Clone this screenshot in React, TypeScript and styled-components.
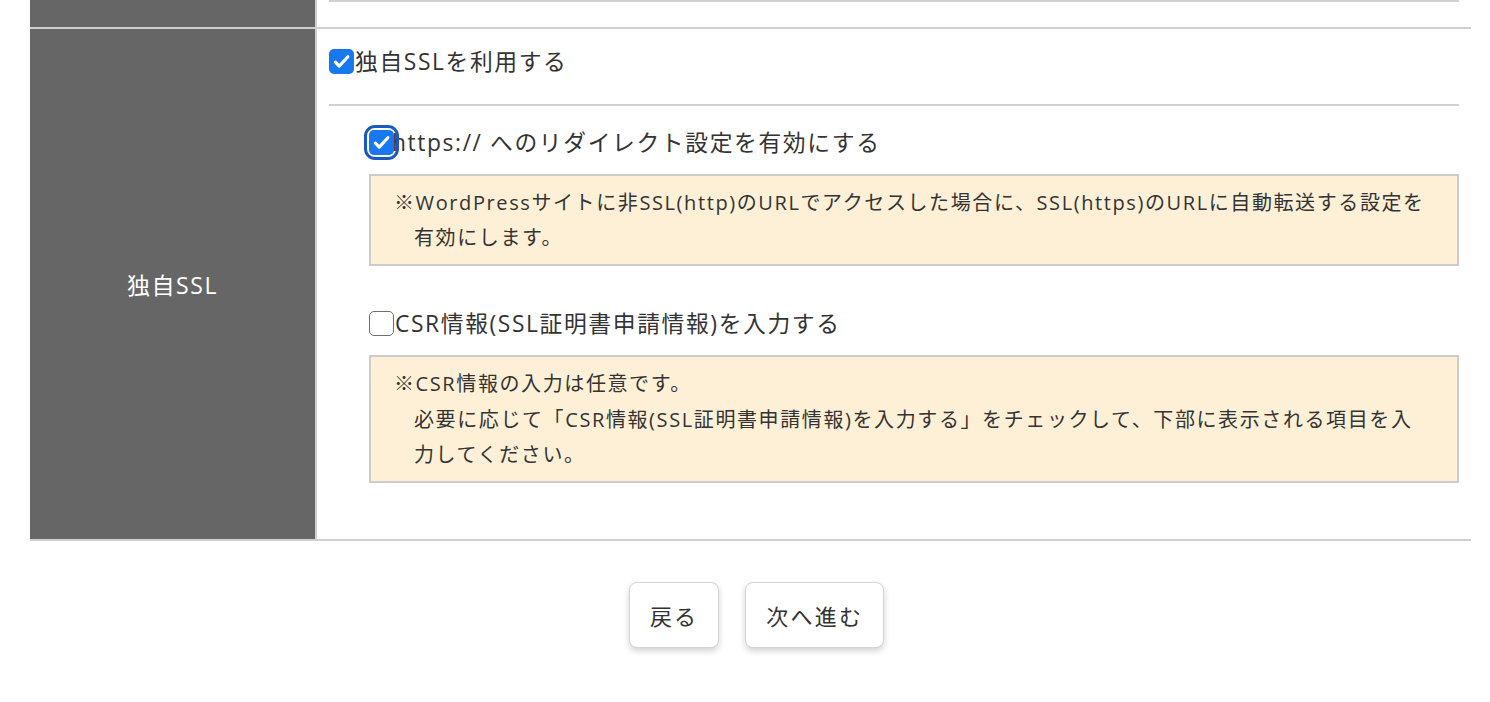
import { FC } from 'react';
import styled, { createGlobalStyle } from 'styled-components';

const GlobalStyle = createGlobalStyle`
    body {
        margin: 0;
        background: #fff;
        color: #333;
        font-family: "Open Sans", "Noto Sans CJK JP", sans-serif;
        letter-spacing: 0.1em;
    }
`;

type CheckProps = {
    checked?: boolean;
    focused?: boolean;
};

const Checkbox: FC<CheckProps> = ({ checked, focused }) => (
    <CheckFrame $focused={focused}>
        <CheckBox $checked={checked}>
            {checked && (
                <svg width="21" height="21" viewBox="0 0 24 24" fill="none">
                    <path d="M5 12.8l4.4 4.4L19.3 6.6" stroke="#fff" strokeWidth="3.6" strokeLinecap="round" strokeLinejoin="round" />
                </svg>
            )}
        </CheckBox>
    </CheckFrame>
);

type OptionProps = CheckProps & { label: string };

const Option: FC<OptionProps> = ({ label, checked, focused }) => (
    <OptionLabel>
        <Checkbox checked={checked} focused={focused} />
        <OptionText $pullLeft={focused}>{label}</OptionText>
    </OptionLabel>
);

export default function App() {
    return (
        <>
            <GlobalStyle />
            <Page>
                <Table>
                    <Row>
                        <LabelCell $short />
                        <ContentCell>
                            <Divider />
                        </ContentCell>
                    </Row>
                    <Row>
                        <LabelCell>独自SSL</LabelCell>
                        <ContentCell>
                            <MainOption>
                                <Option label="独自SSLを利用する" checked />
                            </MainOption>
                            <Divider />
                            <SubOptions>
                                <Option label="https:// へのリダイレクト設定を有効にする" checked focused />
                                <Note>
                                    <NoteLine>※WordPressサイトに非SSL(http)のURLでアクセスした場合に、SSL(https)のURLに自動転送する設定を有効にします。</NoteLine>
                                </Note>
                                <Spacer />
                                <Option label="CSR情報(SSL証明書申請情報)を入力する" />
                                <Note>
                                    <NoteLine>※CSR情報の入力は任意です。</NoteLine>
                                    <NoteLine $indented>必要に応じて「CSR情報(SSL証明書申請情報)を入力する」をチェックして、下部に表示される項目を入力してください。</NoteLine>
                                </Note>
                            </SubOptions>
                        </ContentCell>
                    </Row>
                </Table>
                <Buttons>
                    <Button type="button">戻る</Button>
                    <Button type="button">次へ進む</Button>
                </Buttons>
            </Page>
        </>
    );
}

const Page = styled.div`
    padding: 0 19px 60px 30px;
`;

const Table = styled.div`
    display: flex;
    flex-direction: column;
`;

const Row = styled.div`
    display: grid;
    grid-template-columns: 287px 1fr;
    border-bottom: 2px solid #cfcfcf;
`;

const LabelCell = styled.div<{ $short?: boolean }>`
    display: flex;
    align-items: center;
    justify-content: center;
    min-height: ${p => (p.$short ? '27px' : '0')};
    background: #666;
    color: #fff;
    font-size: 23px;
    border-right: 2px solid #cfcfcf;
`;

const ContentCell = styled.div`
    padding: 0 12px;
`;

const Divider = styled.div`
    height: 2px;
    background: #d0d0d0;
`;

const MainOption = styled.div`
    padding: 20px 0 30px;
`;

const SubOptions = styled.div`
    padding: 24px 0 56px 40px;
    display: flex;
    flex-direction: column;
`;

const Spacer = styled.div`
    height: 45px;
`;

const OptionLabel = styled.label`
    display: flex;
    align-items: center;
    font-size: 22.8px;
    line-height: 25px;
    cursor: pointer;
`;

const OptionText = styled.span<{ $pullLeft?: boolean }>`
    margin-left: ${p => (p.$pullLeft ? '-2px' : '1px')};
`;

const CheckFrame = styled.span<{ $focused?: boolean }>`
    position: relative;
    display: inline-flex;
    flex-shrink: 0;
    border-radius: 6px;
    ${p => p.$focused && `
        z-index: 1;
        outline: 3px solid #1a58c4;
        outline-offset: 2px;
    `}
`;

const CheckBox = styled.span<{ $checked?: boolean }>`
    display: inline-flex;
    align-items: center;
    justify-content: center;
    box-sizing: border-box;
    width: 25px;
    height: 25px;
    border-radius: 5px;
    background: ${p => (p.$checked ? '#1878f0' : '#fff')};
    border: ${p => (p.$checked ? 'none' : '1.5px solid #6e6e6e')};
`;

const Note = styled.div`
    margin-top: 19px;
    padding: 9px 28px 9px 23px;
    background: #fdf0d6;
    border: 2px solid #cccccc;
    font-size: 20px;
    line-height: 35.2px;
`;

const NoteLine = styled.p<{ $indented?: boolean }>`
    margin: 0;
    padding-left: 1em;
    text-indent: ${p => (p.$indented ? '0' : '-1em')};
`;

const Buttons = styled.div`
    display: flex;
    justify-content: center;
    gap: 26px;
    padding: 41px 0 0 12px;
`;

const Button = styled.button`
    height: 66px;
    padding: 0 20px;
    background: #fff;
    color: #333;
    font-family: inherit;
    font-size: 22px;
    letter-spacing: 0.1em;
    border: 1px solid #d4d4d4;
    border-radius: 8px;
    box-shadow: 0 3px 6px rgba(0, 0, 0, 0.18);
    cursor: pointer;
`;
